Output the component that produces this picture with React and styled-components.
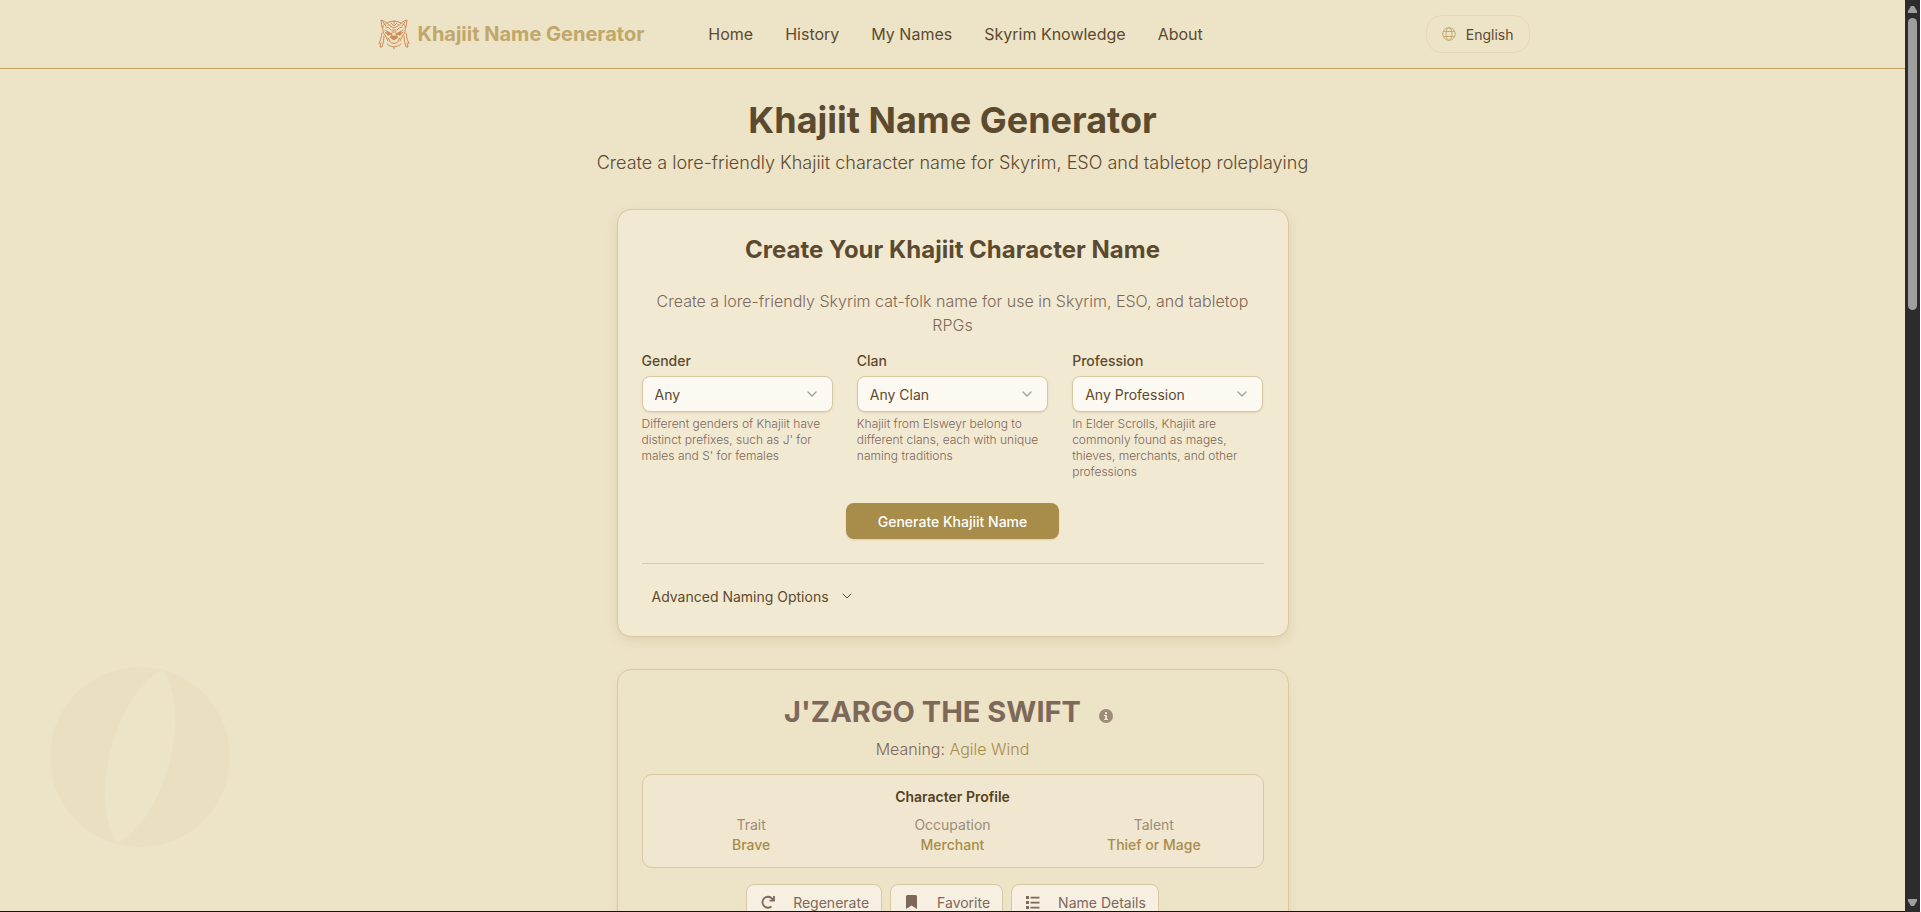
import React from "react";
import styled, { createGlobalStyle } from "styled-components";
import { ChevronDown } from "lucide-react";

const GlobalStyle = createGlobalStyle`
  *, *::before, *::after { box-sizing: border-box; }
  body { margin: 0; background: #fff; }
  body, button, select { font-family: Inter, "Liberation Sans", sans-serif; }
  h1, h2, h3, p, dl, dd { margin: 0; }
`;

const c = {
  bg: "#ede3c7",
  card: "#f2e9d3",
  field: "#fcf8f2",
  line: "#d8c8a0",
  ink: "#5c4a2e",
  muted: "#7d6859",
  gold: "#a88c4a",
};

const Window = styled.div`
  display: flex;
  height: 100vh;
  padding-right: 1px;
  overflow: hidden;
`;

const Page = styled.div`
  position: relative;
  flex: 1;
  overflow: hidden;
  background: ${c.bg};
  border-bottom: 1px solid #14110c;
  color: ${c.ink};
`;

const ScrollTrack = styled.div`
  display: flex;
  flex-direction: column;
  align-items: center;
  width: 15px;
  padding: 5px 0;
  gap: 5px;
  background: #2c2c2c;
`;
const ScrollThumb = styled.div`
  width: 9px;
  height: 32.4%;
  margin-bottom: auto;
  border-radius: 5px;
  background: #9f9f9f;
`;

const Header = styled.header`
  height: 69px;
  border-bottom: 1px solid #bfa061;
`;
const HeaderInner = styled.div`
  display: flex;
  align-items: center;
  max-width: 1154px;
  height: 100%;
  margin: 0 auto;
  padding-left: 2px;
`;
const Brand = styled.a`
  display: flex;
  align-items: center;
  gap: 8px;
  font-size: 20px;
  line-height: 28px;
  font-weight: 700;
  color: #c0a76a;
  text-decoration: none;
`;
const Nav = styled.nav`
  display: flex;
  gap: 32px;
  margin-left: 64px;
`;
const NavLink = styled.a`
  font-size: 16px;
  line-height: 24px;
  color: ${c.ink};
  text-decoration: none;
`;
const Language = styled.button`
  display: flex;
  align-items: center;
  gap: 10px;
  height: 38px;
  margin-left: auto;
  padding: 0 15px;
  border: 1px solid #e5d8b6;
  border-radius: 16px;
  background: transparent;
  color: ${c.ink};
  font-size: 14px;
`;

const Ornament = styled.svg`
  position: absolute;
  left: 50px;
  bottom: 64px;
  width: 180px;
  height: 180px;
`;

const Main = styled.main`
  position: relative;
  display: flex;
  flex-direction: column;
  align-items: center;
  padding-top: 31px;
`;
const Title = styled.h1`
  font-size: 36px;
  line-height: 40px;
  font-weight: 700;
`;
const Subtitle = styled.p`
  margin-top: 9px;
  font-size: 18px;
  line-height: 28px;
  font-weight: 300;
`;
const Card = styled.section`
  width: 100%;
  max-width: 672px;
  margin-top: 32px;
  padding: 24px;
  border: 1px solid ${c.line};
  border-radius: 14px;
  background: ${(p) => (p.$plain ? "transparent" : c.card)};
  box-shadow: 0 4px 12px rgba(140, 110, 50, ${(p) => (p.$plain ? 0.06 : 0.14)});
  text-align: center;
`;
const CardTitle = styled.h2`
  font-size: 24px;
  line-height: 32px;
  font-weight: 700;
`;
const Lead = styled.p`
  margin-top: 23px;
  font-size: 16px;
  line-height: 24px;
  font-weight: 300;
  color: ${c.muted};
`;
const Fields = styled.div`
  display: grid;
  grid-template-columns: repeat(3, 1fr);
  gap: 24px;
  margin-top: 14px;
  text-align: left;
`;
const Label = styled.label`
  display: block;
  margin-bottom: 5px;
  font-size: 14px;
  line-height: 20px;
  font-weight: 500;
`;
const SelectWrap = styled.div`
  position: relative;
  svg {
    position: absolute;
    right: 13px;
    top: 10px;
    color: #a8a39a;
    pointer-events: none;
  }
`;
const Select = styled.select`
  display: block;
  width: 100%;
  height: 36px;
  padding: 0 12px;
  appearance: none;
  border: 1px solid ${c.line};
  border-radius: 8px;
  background: ${c.field};
  box-shadow: 0 1px 2px rgba(140, 110, 50, 0.15);
  color: ${c.ink};
  font-size: 14px;
`;
const Help = styled.p`
  margin-top: 4px;
  font-size: 12px;
  line-height: 16px;
  font-weight: 300;
  color: ${c.muted};
`;
const Primary = styled.button`
  height: 36px;
  margin-top: 23px;
  padding: 0 32px;
  border: 0;
  border-radius: 8px;
  background: ${c.gold};
  box-shadow: 0 1px 2px rgba(140, 110, 50, 0.2);
  color: #fff;
  font-size: 14px;
  font-weight: 500;
`;
const Advanced = styled.div`
  display: flex;
  margin-top: 24px;
  padding-top: 16px;
  border-top: 1px solid #dcc79e;
`;
const Disclosure = styled.button`
  display: flex;
  align-items: center;
  gap: 10px;
  height: 32px;
  padding: 0 10px;
  border: 0;
  background: transparent;
  color: ${c.ink};
  font-size: 14px;
`;

const NameRow = styled.div`
  display: flex;
  justify-content: center;
  gap: 18px;
`;
const GeneratedName = styled.h2`
  font-size: 29px;
  line-height: 36px;
  font-weight: 700;
  color: ${c.muted};
`;
const InfoButton = styled.button`
  display: flex;
  align-items: center;
  padding: 8px 8px 0 0;
  border: 0;
  background: transparent;
`;
const Meaning = styled.p`
  margin-top: 7px;
  font-size: 16px;
  line-height: 24px;
  font-weight: 300;
  color: ${c.muted};
  span { color: ${c.gold}; }
`;
const Profile = styled.div`
  margin-top: 13px;
  padding: 12px;
  border: 1px solid ${c.line};
  border-radius: 10px;
  background: #f1e7d0;
`;
const ProfileTitle = styled.h3`
  font-size: 14px;
  line-height: 20px;
  font-weight: 600;
  color: #54421f;
`;
const Traits = styled.dl`
  display: grid;
  grid-template-columns: repeat(3, 1fr);
  gap: 8px;
  margin-top: 8px;
  font-size: 14px;
  line-height: 20px;
  dt { color: #9c8c78; }
  dd { color: ${c.gold}; font-weight: 500; }
`;
const Actions = styled.div`
  display: flex;
  justify-content: center;
  gap: 8px;
  margin-top: 16px;
`;
const Action = styled.button`
  display: flex;
  align-items: center;
  gap: 17px;
  height: 36px;
  padding: 0 12px 0 13px;
  border: 1px solid ${c.line};
  border-radius: 8px;
  background: #f7f0e2;
  color: ${c.muted};
  font-size: 14px;
`;

const Logo = () => (
  <svg width="32" height="32" viewBox="0 0 32 32" fill="none" stroke="#cf8a55" strokeLinecap="round" strokeLinejoin="round" aria-hidden="true">
    <path d="M4 9 3 2q4 1 7 4M28 9l1-7q-4 1-7 4M5 4l3 4M27 4l-3 4M9 5q7-4 14 0M4 9q1-2 3-3M28 9q-1-2-3-3" />
    <path d="M5 9q-1 5 2 8l3 6M27 9q1 5-2 8l-3 6M9 26q1 2 7 3q6-1 7-3M16 29v2" />
    <path d="M8 9q3 0 5 3M24 9q-3 0-5 3M7 12l5 3M25 12l-5 3M13 5l3 3 3-3M12 8l4 2 4-2M16 3v3M10 7h2M20 7h2M7 14l3 3M25 14l-3 3" />
    <path d="m9 14 5 2-4 1zM23 14l-5 2 4 1zM13 20l3 2 3-2-1-2h-4zM14 16l-2 4M18 16l2 4" fill="#cf8a55" />
    <path d="M4 15q-1 7-3 11M6 18q0 6-2 11h-2l1-4M28 15q1 7 3 11M26 18q0 6 2 11h2l-1-4" />
    <path d="M12 24q4 3 8 0M10 20l2 3M22 20l-2 3M14 12h4M14 14h4" />
  </svg>
);

const Globe = () => (
  <svg width="14" height="14" viewBox="0 0 14 14" fill="none" stroke="#c3ab70" aria-hidden="true">
    <circle cx="7" cy="7" r="6.3" />
    <ellipse cx="7" cy="7" rx="3" ry="6.3" />
    <path d="M1.5 4.5h11M1.5 9.5h11" />
  </svg>
);

const Info = () => (
  <svg width="14" height="14" viewBox="0 0 14 14" aria-hidden="true">
    <circle cx="7" cy="7" r="7" fill="#9c8c78" />
    <path d="M6 3h2v2H6zM5 6h3v4h1v1H5v-1h1V7H5z" fill={c.bg} />
  </svg>
);

const Refresh = () => (
  <svg width="16" height="16" viewBox="0 0 16 16" fill="none" stroke="currentColor" strokeWidth="1.8" aria-hidden="true">
    <path d="M11.500 12.500A5.500 5.500 0 1 1 12 4.500L13.500 6M14 2v4.600H9.500" />
  </svg>
);
const Bookmark = () => (
  <svg width="16" height="16" viewBox="0 0 16 16" fill="currentColor" aria-hidden="true">
    <path d="M2 2.500A1.500 1.500 0 0 1 3.500 1h8A1.500 1.500 0 0 1 13 2.500V15L7.500 11.500 2 15z" />
  </svg>
);
const ListIcon = () => (
  <svg width="16" height="16" viewBox="0 0 16 16" fill="currentColor" aria-hidden="true">
    <path d="M1 2h3v3H1zM1 7h3v3H1zM1 12h3v3H1zM5.500 2.800h9v1.600h-9zM5.500 7.800h9v1.600h-9zM5.500 12.800h9v1.600h-9z" />
  </svg>
);

const Arrow = ({ down }) => (
  <svg width="9" height="8" viewBox="0 0 9 8" fill="#9f9f9f" aria-hidden="true">
    <path d={down ? "M0 0h9v2L6 7H3L0 2z" : "M0 8h9V6L6 1H3L0 6z"} />
  </svg>
);

const links = ["Home", "History", "My Names", "Skyrim Knowledge", "About"];
const fields = [
  { id: "gender", label: "Gender", value: "Any", help: "Different genders of Khajiit have distinct prefixes, such as J' for males and S' for females" },
  { id: "clan", label: "Clan", value: "Any Clan", help: "Khajiit from Elsweyr belong to different clans, each with unique naming traditions" },
  { id: "profession", label: "Profession", value: "Any Profession", help: "In Elder Scrolls, Khajiit are commonly found as mages, thieves, merchants, and other professions" },
];
const traits = [["Trait", "Brave"], ["Occupation", "Merchant"], ["Talent", "Thief or Mage"]];

export default function App() {
  return (
    <Window>
      <GlobalStyle />
      <Page>
        <Ornament viewBox="0 0 180 180" aria-hidden="true">
          <path fill="#eadfc1" fillRule="evenodd" d="M90 0a90 90 0 1 0 0 180a90 90 0 1 0 0-180zM113 3C82 15 56 75 55 122c-1 22 4 43 12 54C98 162 124 105 125 58c1-22-4-44-12-55z" />
        </Ornament>
        <Header>
          <HeaderInner>
            <Brand href="#"><Logo />Khajiit Name Generator</Brand>
            <Nav>{links.map((l) => <NavLink href="#" key={l}>{l}</NavLink>)}</Nav>
            <Language type="button"><Globe />English</Language>
          </HeaderInner>
        </Header>
        <Main>
          <Title>Khajiit Name Generator</Title>
          <Subtitle>Create a lore-friendly Khajiit character name for Skyrim, ESO and tabletop roleplaying</Subtitle>
          <Card>
            <CardTitle>Create Your Khajiit Character Name</CardTitle>
            <Lead>Create a lore-friendly Skyrim cat-folk name for use in Skyrim, ESO, and tabletop RPGs</Lead>
            <Fields>
              {fields.map((f) => (
                <div key={f.id}>
                  <Label htmlFor={f.id}>{f.label}</Label>
                  <SelectWrap>
                    <Select id={f.id}><option>{f.value}</option></Select>
                    <ChevronDown size={16} strokeWidth={2} />
                  </SelectWrap>
                  <Help>{f.help}</Help>
                </div>
              ))}
            </Fields>
            <Primary type="button">Generate Khajiit Name</Primary>
            <Advanced>
              <Disclosure type="button">Advanced Naming Options<ChevronDown size={16} strokeWidth={1.5} /></Disclosure>
            </Advanced>
          </Card>
          <Card $plain>
            <NameRow>
              <GeneratedName>J'ZARGO THE SWIFT</GeneratedName>
              <InfoButton type="button" aria-label="About this name"><Info /></InfoButton>
            </NameRow>
            <Meaning>Meaning: <span>Agile Wind</span></Meaning>
            <Profile>
              <ProfileTitle>Character Profile</ProfileTitle>
              <Traits>
                {traits.map(([k, v]) => <div key={k}><dt>{k}</dt><dd>{v}</dd></div>)}
              </Traits>
            </Profile>
            <Actions>
              <Action type="button"><Refresh />Regenerate</Action>
              <Action type="button"><Bookmark />Favorite</Action>
              <Action type="button"><ListIcon />Name Details</Action>
            </Actions>
          </Card>
        </Main>
      </Page>
      <ScrollTrack aria-hidden="true">
        <Arrow />
        <ScrollThumb />
        <Arrow down />
      </ScrollTrack>
    </Window>
  );
}
